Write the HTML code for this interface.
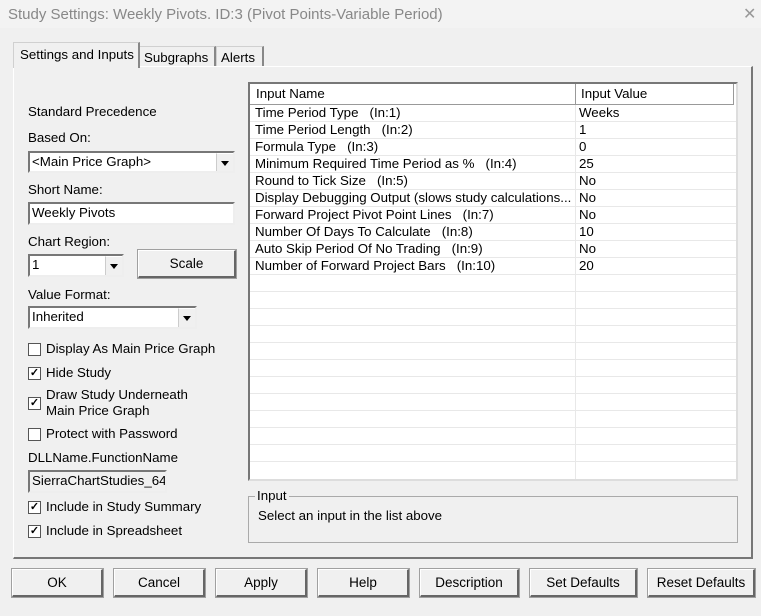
<!DOCTYPE html>
<html><head><meta charset="utf-8"><style>
*{margin:0;padding:0;box-sizing:border-box}
body{width:761px;height:616px;background:#f0f0f0;font-family:"Liberation Sans",sans-serif;font-size:13.3px;color:#000;position:relative;overflow:hidden}
.a{position:absolute;white-space:nowrap}
.title{left:0;top:0;width:761px;height:28px;background:#f3f3f3}
.tt{left:8px;top:6px;font-size:15px;color:#888}
.tab{position:absolute;border:1px solid #d0d0d0;border-bottom:none;border-right:2px solid #888;background:#f0f0f0;padding:3px 4px 0 4px}
.panel{left:13px;top:66px;width:740px;height:493px;border:1px solid #fff;border-right:2px solid #777;border-bottom:2px solid #777}
.inp{position:absolute;background:#fff;border:2px solid #777;border-right-color:#eee;border-bottom-color:#eee;padding:1px 2px;line-height:16px}
.dd{position:absolute;right:0;top:0;width:17px;height:100%;background:#f0f0f0;border-left:1px solid #ccc;border-top:1px solid #fff}
.dd:after{content:"";position:absolute;left:4px;top:7px;border:4px solid transparent;border-top:5px solid #000}
.btn{position:absolute;background:#f0f0f0;border:1px solid #fff;border-right:2px solid #666;border-bottom:2px solid #666;outline:1px solid #a0a0a0;text-align:center;font-size:13.5px}
.cb{position:absolute;width:13px;height:13px;background:#fff;border:1px solid #555;font-size:11px;line-height:11px;text-align:center;font-weight:bold}
.tbl{left:248px;top:82px;width:490px;height:399px;background:#fff;border:2px solid #777;border-right-color:#ddd;border-bottom-color:#ddd;overflow:hidden}
.row{position:absolute;left:0;width:486px;height:17px;border-bottom:1px solid #e8e8e8;line-height:16px}
.row span{position:absolute;left:5px}
.row b{position:absolute;left:329px;font-weight:normal}
.vl{position:absolute;left:325px;top:0;width:1px;height:400px;background:#e8e8e8}
.hdr{position:absolute;left:0;top:0;height:21px;line-height:20px;background:#fff;border-right:1px solid #999;border-bottom:1px solid #999}
</style></head><body>
<div class="a title"></div>
<div class="a tt">Study Settings: Weekly Pivots. ID:3 (Pivot Points-Variable Period)</div>
<div class="a" style="left:743px;top:4px;font-size:16px;color:#999;font-weight:lighter">✕</div>

<div class="a panel"></div>
<div class="tab" style="left:139px;top:46px;width:77px;height:20px">Subgraphs</div>
<div class="tab" style="left:216px;top:46px;width:48px;height:20px">Alerts</div>
<div class="tab" style="left:13px;top:42px;width:127px;height:26px;border-bottom:none;padding-top:4px;padding-left:6px">Settings and Inputs</div>

<div class="a" style="left:28px;top:104px">Standard Precedence</div>
<div class="a" style="left:28px;top:130px">Based On:</div>
<div class="inp" style="left:28px;top:151px;width:207px;height:22px">&lt;Main Price Graph&gt;<div class="dd"></div></div>
<div class="a" style="left:28px;top:182px">Short Name:</div>
<div class="inp" style="left:28px;top:202px;width:207px;height:23px">Weekly Pivots</div>
<div class="a" style="left:28px;top:234px">Chart Region:</div>
<div class="inp" style="left:28px;top:254px;width:96px;height:23px">1<div class="dd"></div></div>
<div class="btn" style="left:138px;top:250px;width:98px;height:28px;line-height:25px">Scale</div>
<div class="a" style="left:28px;top:287px">Value Format:</div>
<div class="inp" style="left:28px;top:306px;width:169px;height:23px">Inherited<div class="dd"></div></div>

<div class="cb" style="left:28px;top:343px"></div><div class="a" style="left:46px;top:341px">Display As Main Price Graph</div>
<div class="cb" style="left:28px;top:367px">✓</div><div class="a" style="left:46px;top:365px">Hide Study</div>
<div class="cb" style="left:28px;top:397px">✓</div><div class="a" style="left:46px;top:387px">Draw Study Underneath</div><div class="a" style="left:46px;top:403px">Main Price Graph</div>
<div class="cb" style="left:28px;top:428px"></div><div class="a" style="left:46px;top:426px">Protect with Password</div>
<div class="a" style="left:28px;top:450px">DLLName.FunctionName</div>
<div class="inp" style="left:28px;top:470px;width:139px;height:23px;background:#f0f0f0;overflow:hidden">SierraChartStudies_64</div>
<div class="cb" style="left:28px;top:501px">✓</div><div class="a" style="left:46px;top:499px">Include in Study Summary</div>
<div class="cb" style="left:28px;top:525px">✓</div><div class="a" style="left:46px;top:523px">Include in Spreadsheet</div>

<div class="a tbl">
<div class="vl"></div>
<div class="row" style="top:21px"><span>Time Period Type &nbsp; (In:1)</span><b>Weeks</b></div>
<div class="row" style="top:38px"><span>Time Period Length &nbsp; (In:2)</span><b>1</b></div>
<div class="row" style="top:55px"><span>Formula Type &nbsp; (In:3)</span><b>0</b></div>
<div class="row" style="top:72px"><span>Minimum Required Time Period as % &nbsp; (In:4)</span><b>25</b></div>
<div class="row" style="top:89px"><span>Round to Tick Size &nbsp; (In:5)</span><b>No</b></div>
<div class="row" style="top:106px"><span>Display Debugging Output (slows study calculations...</span><b>No</b></div>
<div class="row" style="top:123px"><span>Forward Project Pivot Point Lines &nbsp; (In:7)</span><b>No</b></div>
<div class="row" style="top:140px"><span>Number Of Days To Calculate &nbsp; (In:8)</span><b>10</b></div>
<div class="row" style="top:157px"><span>Auto Skip Period Of No Trading &nbsp; (In:9)</span><b>No</b></div>
<div class="row" style="top:174px"><span>Number of Forward Project Bars &nbsp; (In:10)</span><b>20</b></div>
<div class="row" style="top:191px"></div><div class="row" style="top:208px"></div><div class="row" style="top:225px"></div><div class="row" style="top:242px"></div><div class="row" style="top:259px"></div><div class="row" style="top:276px"></div><div class="row" style="top:293px"></div><div class="row" style="top:310px"></div><div class="row" style="top:327px"></div><div class="row" style="top:344px"></div><div class="row" style="top:361px"></div>
<div class="hdr" style="width:326px;padding-left:6px">Input Name</div>
<div class="hdr" style="left:326px;width:158px;padding-left:5px">Input Value</div>
</div>

<div class="a" style="left:248px;top:496px;width:490px;height:47px;border:1px solid #aaa"></div>
<div class="a" style="left:255px;top:488px;background:#f0f0f0;padding:0 2px">Input</div>
<div class="a" style="left:258px;top:508px">Select an input in the list above</div>

<div class="btn" style="left:12px;top:569px;width:91px;height:28px;line-height:25px">OK</div>
<div class="btn" style="left:114px;top:569px;width:91px;height:28px;line-height:25px">Cancel</div>
<div class="btn" style="left:216px;top:569px;width:91px;height:28px;line-height:25px">Apply</div>
<div class="btn" style="left:318px;top:569px;width:91px;height:28px;line-height:25px">Help</div>
<div class="btn" style="left:420px;top:569px;width:99px;height:28px;line-height:25px">Description</div>
<div class="btn" style="left:530px;top:569px;width:107px;height:28px;line-height:25px">Set Defaults</div>
<div class="btn" style="left:648px;top:569px;width:107px;height:28px;line-height:25px">Reset Defaults</div>
</body></html>
